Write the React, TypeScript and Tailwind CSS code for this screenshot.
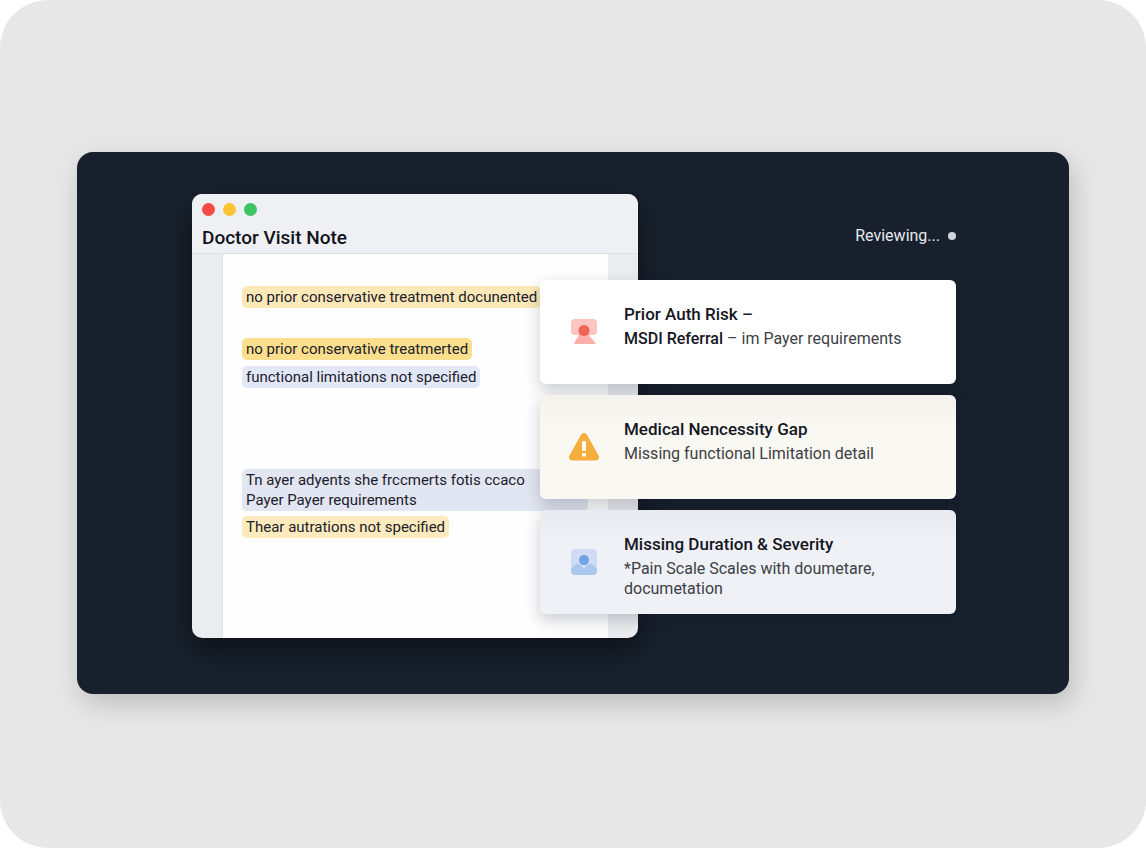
import React from "react";

const notes = [
  {
    text: "no prior conservative treatment docunented",
    style: "bg-[#fde8b8] mb-[30px]",
  },
  {
    text: "no prior conservative treatmerted",
    style: "bg-[#fbdf8c] mb-[6px]",
  },
  {
    text: "functional limitations not specified",
    style: "bg-[#e3e8f8] mb-[81px]",
  },
  {
    text: "Tn ayer adyents she frccmerts fotis ccaco Payer Payer requirements",
    style: "bg-[#e2e6f2] mb-[5px] w-full pr-8",
  },
  {
    text: "Thear autrations not specified",
    style: "bg-[#fdebbd]",
  },
];

function RiskIcon() {
  return (
    <svg viewBox="0 0 28 28" className="w-7 h-7" aria-hidden="true">
      <rect x="1" y="1" width="26" height="16" rx="4" fill="#fbc5c2" />
      <path
        d="M3.200 26.500c1.200-3.500 3.500-7 6.300-9.500h9c2.600 2 5.500 5.500 8.500 9.500z"
        fill="#fbb0aa"
        stroke="#fff"
        strokeWidth="1"
        strokeLinejoin="round"
      />
      <path d="M8.500 15h11v3.500h-11z" fill="#fbb0aa" />
      <circle cx="14" cy="12.500" r="5.500" fill="#ef6659" />
    </svg>
  );
}

function WarningIcon() {
  return (
    <svg viewBox="0 0 32 30" className="w-8 h-[30px]" aria-hidden="true">
      <path
        d="M13 2.800c1.400-2.300 4.600-2.300 6 0l11.500 20.700c1.300 2.500-.2 5-2.900 5H4.400c-2.700 0-4.200-2.500-2.900-5z"
        fill="#f5ad3c"
      />
      <rect x="14" y="9" width="4" height="10" rx="0.800" fill="#fffaf0" />
      <rect x="14" y="21" width="4" height="3.600" rx="1" fill="#fffaf0" />
    </svg>
  );
}

function PersonIcon() {
  return (
    <svg viewBox="0 0 28 28" className="w-7 h-7" aria-hidden="true">
      <rect x="1" y="1" width="26" height="26" rx="4" fill="#cfdcf4" />
      <path
        d="M1 21c1-2.500 4-4.500 7.500-5.500L14 20l5.500-4.500c3.500 1 6.500 3 7.500 5.500v2c0 2.500-1.500 4-4 4H5c-2.500 0-4-1.500-4-4z"
        fill="#aac7ef"
      />
      <path
        d="M8 12a6 6 0 0 1 12 0c0 3.200-2.700 5.300-6 8-3.300-2.700-6-4.800-6-8z"
        fill="#dce7f8"
      />
      <circle cx="14" cy="12" r="5.200" fill="#73a5e5" />
    </svg>
  );
}

const alerts = [
  {
    icon: <RiskIcon />,
    title: "Prior Auth Risk –",
    lead: "MSDI Referral",
    text: " – im Payer requirements",
    style: "bg-white",
  },
  {
    icon: <WarningIcon />,
    title: "Medical Nencessity Gap",
    text: "Missing functional Limitation detail",
    style: "bg-linear-to-b from-[#f5f2ee] to-[#faf8f2] to-30%",
  },
  {
    icon: <PersonIcon />,
    title: "Missing Duration & Severity",
    text: "*Pain Scale Scales with doumetare, documetation",
    style: "bg-linear-to-b from-[#e8eaf0] to-[#eff1f7] to-30%",
  },
];

function NoteWindow() {
  return (
    <section className="flex flex-col col-start-1 col-end-3 row-start-1 overflow-hidden rounded-[10px] bg-[#ebecf0] shadow-[0_12px_28px_rgba(0,0,0,0.45)]">
      <header className="px-[10px] pt-[9px] pb-[3px] bg-[#eff0f3] border-b border-[#dfe0e3]">
        <div className="flex gap-2">
          <span className="w-[13px] h-[13px] rounded-full bg-[#f44b45]" />
          <span className="w-[13px] h-[13px] rounded-full bg-[#fbc433]" />
          <span className="w-[13px] h-[13px] rounded-full bg-[#3cc463]" />
        </div>
        <h1 className="mt-[10px] text-[19px] leading-6 font-medium text-[#11131c]">
          Doctor Visit Note
        </h1>
      </header>
      <div className="flex flex-col items-start flex-1 pt-8 pb-[100px] pl-[19px] pr-5 mx-[30px] bg-[#fefefe] border-l border-[#e2e3e6]">
        {notes.map((note, i) => (
          <p
            key={i}
            className={`px-1 py-px rounded-[5px] text-[15px] leading-5 text-[#20202a] ${note.style}`}
          >
            {note.text}
          </p>
        ))}
      </div>
    </section>
  );
}

function Alerts() {
  return (
    <aside className="z-10 col-start-2 col-end-4 row-start-1 pt-8">
      <p className="flex items-center justify-end gap-2 text-base leading-5 text-[#e6e9ee]">
        Reviewing...
        <span className="w-2 h-2 rounded-full bg-[#cfd5de]" />
      </p>
      <div className="flex flex-col gap-[11px] mt-[34px]">
        {alerts.map((alert, i) => (
          <article
            key={i}
            className={`flex min-h-[104px] pl-7 pr-4 rounded-md shadow-[0_6px_16px_rgba(20,24,40,0.22)] ${alert.style}`}
          >
            <div className="flex items-center justify-center w-8 shrink-0">
              {alert.icon}
            </div>
            <div className="pt-[22px] pl-6 max-w-[304px]">
              <h2 className="text-[17px] leading-6 font-medium text-[#15161f]">
                {alert.title}
              </h2>
              <p className="mt-[3px] text-base leading-5 text-[#3d3f46]">
                {alert.lead && (
                  <span className="font-medium text-[#15161f]">
                    {alert.lead}
                  </span>
                )}
                {alert.text}
              </p>
            </div>
          </article>
        ))}
      </div>
    </aside>
  );
}

export default function App() {
  return (
    <main className="min-h-screen px-[77px] py-[152px] rounded-[48px] bg-[#e7e7e7] font-[Roboto,sans-serif]">
      <div className="grid grid-cols-[348fr_98fr_318fr] pt-[42px] pb-14 pl-[115px] pr-[113px] rounded-2xl bg-[#17202c] shadow-[4px_10px_26px_rgba(0,0,0,0.18)]">
        <NoteWindow />
        <Alerts />
      </div>
    </main>
  );
}
